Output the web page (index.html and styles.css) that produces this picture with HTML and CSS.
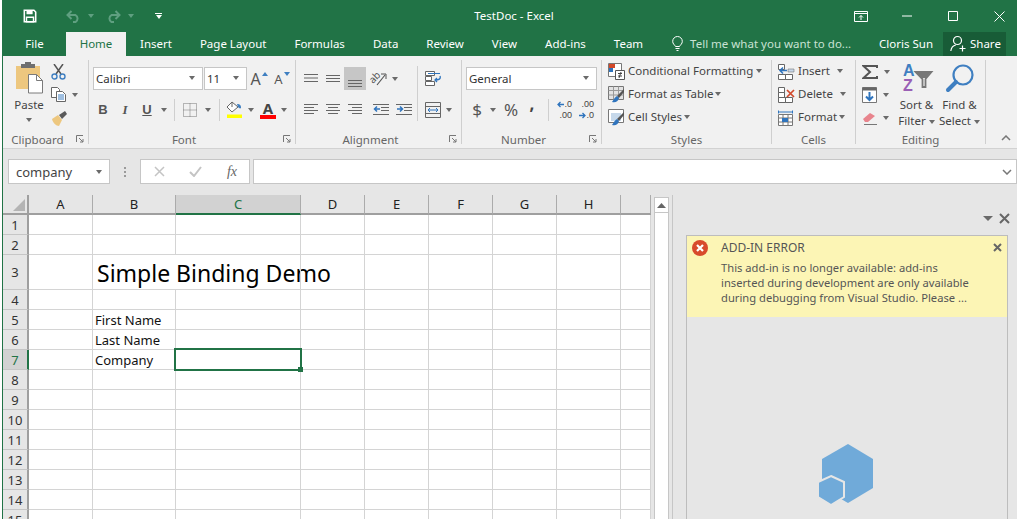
FILE: index.html
```html
<!DOCTYPE html>
<html>
  <head>
    <meta charset="utf-8">
    <title>TestDoc - Excel</title>
    <link rel="stylesheet" href="styles.css">
  </head>
  <body>
    <div class="app">
      <!-- title bar -->
      <div class="titlebar">
        <div class="qat">
          <svg class="qat-save" width="14" height="14" viewBox="0 0 16 16"><path d="M1.500 1.500h11l2 2v11h-13z" fill="none" stroke="#fff" stroke-width="1.800"/><path d="M4 1.500h7v4.500H4z" fill="#fff"/><path d="M4 9.500h8v5H4z" fill="none" stroke="#fff" stroke-width="1.600"/></svg>
          <svg class="qat-undo" width="15" height="13" viewBox="0 0 15 13"><path d="M5.500 1 1.500 5l4 4M2 5h7.500a4 4 0 0 1 0 7H7" fill="none" stroke="#5f9f80" stroke-width="2"/></svg>
          <span class="caret dim qat-c1"></span>
          <svg class="qat-redo" width="15" height="13" viewBox="0 0 15 13"><path d="M9.500 1l4 4-4 4M13 5H5.500a4 4 0 0 0 0 7H8" fill="none" stroke="#5f9f80" stroke-width="2"/></svg>
          <span class="caret dim qat-c2"></span>
          <div class="qat-more"><span></span><span class="caret white"></span></div>
        </div>
        <div class="doc-title">TestDoc - Excel</div>
        <div class="win-btns">
          <svg width="14" height="11" viewBox="0 0 14 11"><path d="M.5.500h13v10H.500zM.5 2.500h13" fill="none" stroke="#fff"/><path d="M7 9V4.500M5 6.500l2-2 2 2" fill="none" stroke="#fff"/></svg>
          <svg class="win-min" width="10" height="10" viewBox="0 0 10 10"><path d="M0 5h10" stroke="#fff"/></svg>
          <svg class="win-max" width="10" height="10" viewBox="0 0 10 10"><path d="M.5.500h9v9h-9z" fill="none" stroke="#fff"/></svg>
          <svg class="win-close" width="11" height="11" viewBox="0 0 11 11"><path d="M.5.500l10 10M10.500.500l-10 10" stroke="#fff"/></svg>
        </div>
      </div>

      <!-- tabs -->
      <div class="tabs">
        <div class="tab tab-file">File</div>
        <div class="tab active">Home</div>
        <div class="tab">Insert</div>
        <div class="tab">Page Layout</div>
        <div class="tab">Formulas</div>
        <div class="tab">Data</div>
        <div class="tab">Review</div>
        <div class="tab">View</div>
        <div class="tab">Add-ins</div>
        <div class="tab">Team</div>
        <div class="tell">
          <svg width="11" height="15" viewBox="0 0 11 15"><path d="M3.500 10.500C2.500 8.500.7 8 .7 5.300a4.800 4.800 0 0 1 9.600 0c0 2.700-1.800 3.200-2.800 5.200zM3.500 12.500h4M4.500 14.500h2" fill="none" stroke="#fff"/></svg>
          <span>Tell me what you want to do...</span>
        </div>
        <div class="user">Cloris Sun</div>
        <div class="share">
          <svg width="17" height="17" viewBox="0 0 17 17"><circle cx="7.500" cy="5.500" r="4" fill="none" stroke="#fff" stroke-width="1.200"/><path d="M.8 16c.5-3.500 2.500-5.500 5-6M12.500 10.500v6M9.500 13.500h6" fill="none" stroke="#fff" stroke-width="1.200"/></svg>
          <span>Share</span>
        </div>
      </div>

      <!-- ribbon -->
      <div class="ribbon">
        <div class="group g-clipboard">
          <div class="group-body clip-body">
            <div class="paste">
              <svg class="paste-icon" width="30" height="32" viewBox="0 0 30 32"><path d="M1 4h24v23H1z" fill="#edc77f"/><path d="M6 2h4V0h6v2h4v4H6z" fill="#6f6f6f"/><path d="M13.500 12.500h8l6 6v12.500h-14z" fill="#fff" stroke="#7a7a7a"/><path d="M21.500 12.500v6h6" fill="none" stroke="#7a7a7a"/></svg>
              <div class="paste-label">Paste</div>
              <span class="caret"></span>
            </div>
            <div class="clip-tools">
              <div class="clip-row">
                <svg width="15" height="16" viewBox="0 0 15 16"><path d="M3 0l7 10M12 0 5 10" stroke="#555" stroke-width="1.500" fill="none"/><circle cx="3.500" cy="12.500" r="2.500" fill="none" stroke="#3f7fc1" stroke-width="1.400"/><circle cx="11.500" cy="12.500" r="2.500" fill="none" stroke="#3f7fc1" stroke-width="1.400"/></svg>
              </div>
              <div class="clip-row">
                <svg width="15" height="15" viewBox="0 0 15 15"><path d="M.5.500h6l2 2v8h-8z" fill="#fff" stroke="#666"/><path d="M5.500 4.500h6l3 3v7h-9z" fill="#fff" stroke="#666"/><path d="M7 8h6M7 10h6M7 12h6" stroke="#3f7fc1"/></svg>
                <span class="caret"></span>
              </div>
              <div class="clip-row">
                <svg width="17" height="16" viewBox="0 0 17 16"><path d="M1 9l6-4 4 5-3 6c-3 0-6-3-7-7z" fill="#edc77f"/><path d="M8 5l6-4 2 3-5 5z" fill="#5a5a5a"/></svg>
              </div>
            </div>
          </div>
          <div class="group-label"><span>Clipboard</span><svg class="launcher" width="8" height="8" viewBox="0 0 8 8"><path d="M.5 7V.5H7M3 3l4 4M7 4v3H4" fill="none" stroke="#777"/></svg></div>
        </div>

        <div class="group g-font">
          <div class="group-body two-rows">
            <div class="row pad-4">
              <div class="combo w-110"><span>Calibri</span><span class="caret"></span></div>
              <div class="combo w-43 gap-1"><span>11</span><span class="caret"></span></div>
              <div class="tool t22 gap-1 grow-a"><span class="a-big">A</span><svg width="6" height="4" viewBox="0 0 6 4"><path d="M0 4l3-4 3 4z" fill="#3f7fc1"/></svg></div>
              <div class="tool t22 gap-1 grow-a"><span class="a-small">A</span><svg width="6" height="4" viewBox="0 0 6 4"><path d="M0 0l3 4 3-4z" fill="#3f7fc1"/></svg></div>
            </div>
            <div class="row pad-3">
              <div class="tool t22 fmt fmt-b">B</div>
              <div class="tool t22 fmt fmt-i">I</div>
              <div class="tool t22 fmt fmt-u">U</div>
              <div class="tool t12"><span class="caret"></span></div>
              <div class="sep"></div>
              <div class="tool t22"><svg width="14" height="14" viewBox="0 0 14 14"><path d="M.5.500h13v13H.500zM7 .5v13M.5 7h13" fill="none" stroke="#777" stroke-dasharray="1 1"/></svg></div>
              <div class="tool t14"><span class="caret"></span></div>
              <div class="sep"></div>
              <div class="tool t20">
                <svg width="17" height="17" viewBox="0 0 17 17"><path d="M6 1 1 6l5 5 6-5z" fill="#fff" stroke="#666"/><path d="M6 1v5" stroke="#666"/><path d="M11 3c3 0 4 1 4 4-1 1-2 0-3-1z" fill="#3f7fc1"/><path d="M1 13.500h15V17H1z" fill="#ffff00"/></svg>
              </div>
              <div class="tool t14"><span class="caret"></span></div>
              <div class="tool t20 font-color"><span>A</span><i></i></div>
              <div class="tool t12"><span class="caret"></span></div>
            </div>
          </div>
          <div class="group-label"><span>Font</span><svg class="launcher" width="8" height="8" viewBox="0 0 8 8"><path d="M.5 7V.5H7M3 3l4 4M7 4v3H4" fill="none" stroke="#777"/></svg></div>
        </div>

        <div class="group g-align">
          <div class="group-body cols">
            <div class="two-rows col-117">
              <div class="row">
                <div class="tool t22"><svg width="14" height="9" viewBox="0 0 14 9"><path d="M0 .5h14M0 4h14M0 7.500h14" stroke="#666"/></svg></div>
                <div class="tool t22"><svg width="14" height="9" viewBox="0 0 14 9"><path d="M0 1.500h14M0 4.500h14M0 7.500h14" stroke="#666"/></svg></div>
                <div class="tool t22 pressed"><svg width="14" height="22" viewBox="0 0 14 22"><path d="M0 13.500h14M0 16.500h14M0 19.500h14" stroke="#666"/></svg></div>
                <div class="tool t24"><svg class="orient-icon" width="18" height="17" viewBox="0 0 18 17"><text class="orient" x="1" y="11" transform="rotate(-45 6 9)">ab</text><path d="M8 15 16 5" stroke="#555" stroke-width="1.200"/><path d="M12 4h5v5" fill="none" stroke="#555"/></svg></div>
                <div class="tool t10"><span class="caret"></span></div>
              </div>
              <div class="row">
                <div class="tool t22"><svg width="14" height="11" viewBox="0 0 14 11"><path d="M0 .5h14M0 3.500h10M0 6.500h14M0 9.500h10" stroke="#666"/></svg></div>
                <div class="tool t22"><svg width="14" height="11" viewBox="0 0 14 11"><path d="M0 .5h14M2 3.500h10M0 6.500h14M2 9.500h10" stroke="#666"/></svg></div>
                <div class="tool t22"><svg width="14" height="11" viewBox="0 0 14 11"><path d="M0 .5h14M4 3.500h10M0 6.500h14M4 9.500h10" stroke="#666"/></svg></div>
                <div class="tool t23 gap-3"><svg width="16" height="12" viewBox="0 0 16 12"><path d="M0 .5h16M8 3.500h8M8 6.500h8M0 10.500h16" stroke="#666"/><path d="M7 5H2M4 2.500 1.500 5 4 7.500" fill="none" stroke="#2f74bd" stroke-width="1.500"/></svg></div>
                <div class="tool t23"><svg width="16" height="12" viewBox="0 0 16 12"><path d="M0 .5h16M8 3.500h8M8 6.500h8M0 10.500h16" stroke="#666"/><path d="M1 5h5M4 2.500 6.500 5 4 7.500" fill="none" stroke="#2f74bd" stroke-width="1.500"/></svg></div>
              </div>
            </div>
            <div class="sep sep-tall"></div>
            <div class="two-rows">
              <div class="row">
                <div class="tool t22"><svg width="16" height="15" viewBox="0 0 16 15"><path d="M.5.500h9v4h-9zM.5 5.500h6v4h-6zM.5 10.500h9v4h-9z" fill="#fff" stroke="#666"/><path d="M3 2.500h12" stroke="#2f74bd"/><path d="M15 5c1 3-1 4-5 4M12 7l-2 2 2 2" fill="none" stroke="#2f74bd" stroke-width="1.300"/></svg></div>
              </div>
              <div class="row">
                <div class="tool t22"><svg width="16" height="16" viewBox="0 0 16 16"><path d="M.5.500h15v15H.500zM.5 4.500h15M.5 11.500h15" fill="none" stroke="#666"/><path d="M3 8h10M5 6 3 8l2 2M11 6l2 2-2 2" fill="none" stroke="#2f74bd"/></svg></div>
                <div class="tool t10"><span class="caret"></span></div>
              </div>
            </div>
          </div>
          <div class="group-label"><span>Alignment</span><svg class="launcher" width="8" height="8" viewBox="0 0 8 8"><path d="M.5 7V.5H7M3 3l4 4M7 4v3H4" fill="none" stroke="#777"/></svg></div>
        </div>

        <div class="group g-number">
          <div class="group-body two-rows">
            <div class="row pad-4">
              <div class="combo w-131"><span>General</span><span class="caret"></span></div>
            </div>
            <div class="row pad-4">
              <div class="tool t22 sym-big">$</div>
              <div class="tool t10"><span class="caret"></span></div>
              <div class="tool t26 sym-big">%</div>
              <div class="tool t16 sym-comma">,</div>
              <div class="sep sep-num"></div>
              <div class="tool t16 dec-inc"><div class="dec-top"><svg width="7" height="7" viewBox="0 0 7 7"><path d="M7 3.500H1M3.500 1 1 3.500 3.500 6" fill="none" stroke="#2f74bd" stroke-width="1.300"/></svg>.0</div><div>.00</div></div>
              <div class="tool t16 dec-dec"><div>.00</div><div class="dec-top"><svg width="7" height="7" viewBox="0 0 7 7"><path d="M0 3.500h6M3.500 1 6 3.500 3.500 6" fill="none" stroke="#2f74bd" stroke-width="1.300"/></svg>.0</div></div>
            </div>
          </div>
          <div class="group-label"><span>Number</span><svg class="launcher" width="8" height="8" viewBox="0 0 8 8"><path d="M.5 7V.5H7M3 3l4 4M7 4v3H4" fill="none" stroke="#777"/></svg></div>
        </div>

        <div class="group g-styles">
          <div class="group-body">
            <div class="list-row">
              <svg width="17" height="17" viewBox="0 0 17 17"><path d="M.5.500h13v13H.500z" fill="#fff" stroke="#777"/><path d="M1 1h6v4H1z" fill="#d2492a"/><path d="M1 5h4v4H1z" fill="#2f74bd"/><path d="M7.500 7.500h9v9h-9z" fill="#fff" stroke="#555"/><path d="M10 10.500h4M10 13h4M13 9l-2 6" stroke="#444" fill="none"/></svg>
              <span>Conditional Formatting</span><span class="caret"></span>
            </div>
            <div class="list-row">
              <svg width="17" height="17" viewBox="0 0 17 17"><path d="M.5.500h15v13H.500z" fill="#e3e3e3" stroke="#777"/><path d="M.5 4.500h15M.5 9h15M5.500.5v13M10.500.5v13" stroke="#999"/><path d="M16 3 9 10l2 2 5-6z" fill="#555"/><path d="M9 10c-2 1-3 3-5 6 3 1 6 0 7-4z" fill="#2f74bd"/></svg>
              <span>Format as Table</span><span class="caret tight-caret"></span>
            </div>
            <div class="list-row">
              <svg width="17" height="17" viewBox="0 0 17 17"><path d="M.5.500h15v13H.500z" fill="#fff" stroke="#777"/><path d="M3 4h10v8H3z" fill="#c6d8ea"/><path d="M16 3 9 10l2 2 5-6z" fill="#555"/><path d="M9 10c-2 1-3 3-5 6 3 1 6 0 7-4z" fill="#2f74bd"/></svg>
              <span>Cell Styles</span><span class="caret tight-caret"></span>
            </div>
          </div>
          <div class="group-label plain"><span>Styles</span></div>
        </div>

        <div class="group g-cells">
          <div class="group-body">
            <div class="list-row">
              <svg width="17" height="16" viewBox="0 0 17 16"><path d="M.5.500h6v5h-6zM.5 10.500h7v5h-7zM7.500 10.500h7v5h-7z" fill="#fff" stroke="#666"/><path d="M10 5h6V8h-6z" fill="#c6d8ea" stroke="#777" stroke-width=".6"/><path d="M9 6.500H2M5 3.500l-3 3 3 3" fill="none" stroke="#2f74bd" stroke-width="1.500"/></svg>
              <span>Insert</span><span class="caret cells-caret"></span>
            </div>
            <div class="list-row">
              <svg width="17" height="16" viewBox="0 0 17 16"><path d="M.5.500h6v5h-6zM.5 10.500h7v5h-7zM7.500 10.500h7v5h-7zM.5 5.500h6v5h-6z" fill="#fff" stroke="#666"/><path d="M9 3l7 7M16 3l-7 7" stroke="#d2492a" stroke-width="1.700"/></svg>
              <span>Delete</span><span class="caret cells-caret"></span>
            </div>
            <div class="list-row">
              <svg width="17" height="16" viewBox="0 0 17 16"><path d="M.5.500v3M14.500.5v3M1 2h13" stroke="#2f74bd" fill="none"/><path d="M.5 4.500h14v11H.500zM.5 8h14M.5 12h14M5 4.500v11M10 4.500v11" fill="#fff" stroke="#777"/><path d="M4 8h6v4H4z" fill="#2f74bd"/></svg>
              <span>Format</span><span class="caret tight-caret"></span>
            </div>
          </div>
          <div class="group-label plain"><span>Cells</span></div>
        </div>

        <div class="group g-editing">
          <div class="group-body edit-body">
            <div class="edit-small">
              <div class="edit-row">
                <svg width="16" height="14" viewBox="0 0 16 14"><path d="M15 3V1H1.500L8 7l-6.500 6H15v-2" fill="none" stroke="#555" stroke-width="2"/></svg>
                <span class="caret"></span>
              </div>
              <div class="edit-row">
                <svg width="15" height="16" viewBox="0 0 15 16"><path d="M.5.500h14v15H.500z" fill="#fff" stroke="#777"/><path d="M.5 .5h14v3H.500z" fill="#666"/><path d="M7.500 5v8M4 9.500l3.500 3.500L11 9.500" fill="none" stroke="#2f74bd" stroke-width="2"/></svg>
                <span class="caret"></span>
              </div>
              <div class="edit-row">
                <svg width="15" height="14" viewBox="0 0 15 14"><path d="M1 8l7-6 5 3-7 6H3z" fill="#e8848d"/><path d="M2 13.500h13" stroke="#777"/></svg>
                <span class="caret"></span>
              </div>
            </div>
            <div class="big-btn b-sort">
              <svg class="sort-icon" width="30" height="30" viewBox="0 0 30 30"><text x="1" y="13" class="az az-a">A</text><text x="1" y="28" class="az az-z">Z</text><path d="M13.500 9h16l-6 7v8h-3v-8z" fill="none" stroke="#777" stroke-width="1.800"/><path d="M14 9h15l-5 6h-5z" fill="#777"/></svg>
              <div>Sort &amp;</div>
              <div>Filter<span class="caret"></span></div>
            </div>
            <div class="big-btn b-find">
              <svg width="30" height="30" viewBox="0 0 30 30"><circle cx="18" cy="12" r="9.500" fill="none" stroke="#3f7fc1" stroke-width="2.200"/><path d="M11 19 3 27" stroke="#3f7fc1" stroke-width="4" stroke-linecap="round"/></svg>
              <div>Find &amp;</div>
              <div>Select<span class="caret"></span></div>
            </div>
          </div>
          <div class="group-label plain"><span>Editing</span></div>
        </div>

        <svg class="collapse" width="10" height="6" viewBox="0 0 10 6"><path d="M1 5l4-4 4 4" fill="none" stroke="#777" stroke-width="1.500"/></svg>
      </div>

      <!-- formula bar -->
      <div class="formula-bar">
        <div class="name-box"><span>company</span><span class="caret"></span></div>
        <div class="grip"><i></i><i></i><i></i></div>
        <div class="fx-box">
          <svg width="11" height="11" viewBox="0 0 11 11"><path d="M1 1l9 9M10 1l-9 9" stroke="#c4c4c4" stroke-width="1.500"/></svg>
          <svg width="13" height="11" viewBox="0 0 13 11"><path d="M1 6l4 4 7-9" fill="none" stroke="#c4c4c4" stroke-width="2"/></svg>
          <span class="fx">fx</span>
        </div>
        <div class="formula-input">
          <svg width="10" height="6" viewBox="0 0 10 6"><path d="M1 1l4 4 4-4" fill="none" stroke="#777" stroke-width="1.500"/></svg>
        </div>
      </div>

      <div class="work">
        <!-- sheet -->
        <div class="sheet">
          <div class="ch corner"><svg width="12" height="12" viewBox="0 0 12 12"><path d="M12 0v12H0z" fill="#b4b4b4"/></svg></div>
          <div class="ch">A</div><div class="ch">B</div><div class="ch ch-on">C</div><div class="ch">D</div><div class="ch">E</div><div class="ch">F</div><div class="ch">G</div><div class="ch">H</div><div class="ch"></div>

          <div class="rh">1</div><div class="c"></div><div class="c"></div><div class="c"></div><div class="c"></div><div class="c"></div><div class="c"></div><div class="c"></div><div class="c"></div><div class="c"></div>
          <div class="rh">2</div><div class="c"></div><div class="c"></div><div class="c"></div><div class="c"></div><div class="c"></div><div class="c"></div><div class="c"></div><div class="c"></div><div class="c"></div>
          <div class="rh">3</div><div class="c"></div><div class="c c-title">Simple Binding Demo</div><div class="c"></div><div class="c"></div><div class="c"></div><div class="c"></div><div class="c"></div><div class="c"></div><div class="c"></div>
          <div class="rh">4</div><div class="c"></div><div class="c"></div><div class="c"></div><div class="c"></div><div class="c"></div><div class="c"></div><div class="c"></div><div class="c"></div><div class="c"></div>
          <div class="rh">5</div><div class="c"></div><div class="c">First Name</div><div class="c"></div><div class="c"></div><div class="c"></div><div class="c"></div><div class="c"></div><div class="c"></div><div class="c"></div>
          <div class="rh">6</div><div class="c"></div><div class="c">Last Name</div><div class="c"></div><div class="c"></div><div class="c"></div><div class="c"></div><div class="c"></div><div class="c"></div><div class="c"></div>
          <div class="rh rh-on">7</div><div class="c"></div><div class="c">Company</div><div class="c selected"><i></i></div><div class="c"></div><div class="c"></div><div class="c"></div><div class="c"></div><div class="c"></div><div class="c"></div>
          <div class="rh">8</div><div class="c"></div><div class="c"></div><div class="c"></div><div class="c"></div><div class="c"></div><div class="c"></div><div class="c"></div><div class="c"></div><div class="c"></div>
          <div class="rh">9</div><div class="c"></div><div class="c"></div><div class="c"></div><div class="c"></div><div class="c"></div><div class="c"></div><div class="c"></div><div class="c"></div><div class="c"></div>
          <div class="rh">10</div><div class="c"></div><div class="c"></div><div class="c"></div><div class="c"></div><div class="c"></div><div class="c"></div><div class="c"></div><div class="c"></div><div class="c"></div>
          <div class="rh">11</div><div class="c"></div><div class="c"></div><div class="c"></div><div class="c"></div><div class="c"></div><div class="c"></div><div class="c"></div><div class="c"></div><div class="c"></div>
          <div class="rh">12</div><div class="c"></div><div class="c"></div><div class="c"></div><div class="c"></div><div class="c"></div><div class="c"></div><div class="c"></div><div class="c"></div><div class="c"></div>
          <div class="rh">13</div><div class="c"></div><div class="c"></div><div class="c"></div><div class="c"></div><div class="c"></div><div class="c"></div><div class="c"></div><div class="c"></div><div class="c"></div>
          <div class="rh">14</div><div class="c"></div><div class="c"></div><div class="c"></div><div class="c"></div><div class="c"></div><div class="c"></div><div class="c"></div><div class="c"></div><div class="c"></div>
          <div class="rh">15</div><div class="c"></div><div class="c"></div><div class="c"></div><div class="c"></div><div class="c"></div><div class="c"></div><div class="c"></div><div class="c"></div><div class="c"></div>
        </div>

        <div class="vscroll">
          <div class="vscroll-up"><svg width="9" height="5" viewBox="0 0 9 5"><path d="M0 5l4.500-5L9 5z" fill="#666"/></svg></div>
        </div>

        <!-- task pane -->
        <div class="pane">
          <div class="pane-head">
            <span class="caret pane-caret"></span>
            <svg width="11" height="11" viewBox="0 0 11 11"><path d="M1 1l9 9M10 1l-9 9" stroke="#666" stroke-width="2"/></svg>
          </div>
          <div class="pane-box">
            <div class="error">
              <svg class="error-icon" width="16" height="16" viewBox="0 0 16 16"><circle cx="8" cy="8" r="8" fill="#d84a2c"/><path d="M5 5l6 6M11 5l-6 6" stroke="#fff" stroke-width="2.200"/></svg>
              <div class="error-text">
                <div class="error-title">ADD-IN ERROR</div>
                <div>This add-in is no longer available: add-ins<br>inserted during development are only available<br>during debugging from Visual Studio. Please ...</div>
              </div>
              <svg class="error-close" width="9" height="9" viewBox="0 0 9 9"><path d="M1 1l7 7M8 1 1 8" stroke="#666" stroke-width="2"/></svg>
            </div>
            <div class="pane-cube">
              <svg width="60" height="64" viewBox="0 0 60 64"><path d="M32 0l25 15v29L32 59 6 44V15z" fill="#70aad9"/><path d="M15 32l13 6v15l-13 8-13-8V38z" fill="#70aad9" stroke="#e6e6e6" stroke-width="2"/></svg>
            </div>
          </div>
        </div>
      </div>
    </div>
  </body>
</html>
```

FILE: styles.css
```css
* {
  box-sizing: border-box;
}

html, body {
  margin: 0;
  height: 100%;
  overflow: hidden;
  background: #fff;
}

body {
  font-family: "Noto Sans", "Open Sans", sans-serif;
  font-size: 11.5px;
  color: #444;
}

.app {
  display: flex;
  flex-direction: column;
  height: 519px;
  margin-left: 2px;
  border-left: 1px solid #217346;
  overflow: hidden;
}

.caret {
  display: inline-block;
  flex: none;
  width: 0;
  height: 0;
  border-left: 3.5px solid transparent;
  border-right: 3.5px solid transparent;
  border-top: 4px solid #6a6a6a;
}
.caret.dim {
  border-top-color: #5f9f80;
}
.caret.white {
  border-top-color: #fff;
}

/* title bar */
.titlebar {
  display: flex;
  align-items: center;
  flex: none;
  height: 32px;
  background: #217346;
  color: #fff;
}
.qat, .win-btns {
  display: flex;
  flex: 1;
  align-items: center;
}
.qat {
  padding-left: 20px;
}
.qat-undo {
  margin-left: 29px;
}
.qat-c1 {
  margin-left: 7px;
}
.qat-redo {
  margin-left: 12px;
}
.qat-c2 {
  margin-left: 7px;
}
.qat-more {
  display: flex;
  flex-direction: column;
  align-items: center;
  gap: 1px;
  margin-left: 21px;
}
.qat-more span:first-child {
  width: 7px;
  height: 1px;
  background: #fff;
}
.doc-title {
  padding-bottom: 1px;
}
.win-btns {
  justify-content: flex-end;
  padding-right: 12px;
}
.win-min {
  margin-left: 34px;
}
.win-max {
  margin-left: 36px;
}
.win-close {
  margin-left: 36px;
}

/* tabs */
.tabs {
  display: flex;
  align-items: stretch;
  flex: none;
  height: 24px;
  background: #217346;
  color: #fff;
  white-space: nowrap;
}
.tab {
  display: flex;
  align-items: center;
  flex: none;
  padding: 0 14px 1px;
}
.tab-file {
  justify-content: center;
  width: 63px;
  padding: 0 0 1px;
}
.tab.active {
  width: 60px;
  justify-content: center;
  padding: 0 0 1px;
  background: #f1f1f1;
  color: #217346;
}
.tell {
  display: flex;
  align-items: center;
  gap: 7px;
  margin-left: 15px;
  padding-bottom: 1px;
  color: #c9e2d4;
}
.user {
  display: flex;
  align-items: center;
  margin-left: auto;
  padding-bottom: 1px;
}
.share {
  display: flex;
  align-items: center;
  gap: 3px;
  width: 63px;
  margin: 0 11px 0 10px;
  padding: 0 0 1px 7px;
  background: #185c37;
}

/* ribbon */
.ribbon {
  display: flex;
  flex: none;
  height: 93px;
  padding-top: 4px;
  background: #f1f1f1;
  border-bottom: 1px solid #d2d2d2;
  white-space: nowrap;
}
.group {
  display: flex;
  flex-direction: column;
  height: 84px;
  border-right: 1px solid #cfcfcf;
}
.g-clipboard { width: 86px; }
.g-font { width: 207px; }
.g-align { width: 166px; }
.g-number { width: 140px; }
.g-styles { width: 170px; }
.g-cells { width: 84px; }
.g-editing { width: 130px; }

.group-body {
  flex: none;
  height: 71px;
}
.group-label {
  display: flex;
  align-items: center;
  flex: none;
  height: 16px;
  color: #666;
}
.group-label span {
  flex: 1;
  text-align: center;
}
.launcher {
  flex: none;
  margin: 0 4px;
}
.collapse {
  align-self: flex-end;
  margin: 0 6px 7px auto;
}

.two-rows {
  display: flex;
  flex-direction: column;
  gap: 8px;
  padding-top: 7px;
}
.cols {
  display: flex;
  padding-left: 4px;
}
.col-117 {
  width: 117px;
}
.row {
  display: flex;
  align-items: center;
  height: 23px;
}
.pad-3 { padding-left: 3px; }
.pad-4 { padding-left: 4px; }
.gap-1 { margin-left: 1px; }
.gap-3 { margin-left: 3px; }

.tool {
  display: flex;
  align-items: center;
  justify-content: center;
  flex: none;
  height: 22px;
}
.t10 { width: 10px; }
.t12 { width: 12px; }
.t14 { width: 14px; }
.t16 { width: 16px; }
.t20 { width: 20px; }
.t22 { width: 22px; }
.t23 { width: 23px; }
.t24 { width: 24px; }
.t26 { width: 26px; }

.pressed {
  align-items: flex-start;
  height: 23px;
  background: #c6c6c6;
}
.sep {
  flex: none;
  width: 1px;
  height: 22px;
  margin: 0 4px;
  background: #cfcfcf;
}
.sep-tall {
  height: 55px;
  margin: 6px 4px 0 0;
}
.sep-num {
  margin: 0 7px 0 8px;
}

.orient-icon {
  overflow: visible;
}
.orient {
  font-size: 10px;
  fill: #555;
}

.combo {
  display: flex;
  align-items: center;
  justify-content: space-between;
  flex: none;
  height: 23px;
  padding: 0 7px 1px 2px;
  background: #fff;
  border: 1px solid #c6c6c6;
  color: #333;
}
.w-110 { width: 110px; }
.w-43 { width: 43px; }
.w-131 { width: 131px; }

/* clipboard */
.clip-body {
  display: flex;
}
.paste {
  display: flex;
  flex-direction: column;
  align-items: center;
  width: 34px;
  margin-left: 9px;
  padding-top: 2px;
}
.paste-icon {
  flex: none;
  margin-left: 2px;
}
.paste-label {
  margin-top: 2px;
  line-height: 17px;
}
.paste .caret {
  margin-top: 5px;
}
.clip-tools {
  margin-left: 4px;
}
.clip-row {
  display: flex;
  align-items: center;
  gap: 6px;
  height: 23px;
  padding-left: 1px;
}

/* font */
.grow-a {
  align-items: center;
  gap: 1px;
  color: #555;
}
.grow-a svg {
  margin-bottom: 10px;
}
.a-big {
  font-size: 16px;
}
.a-small {
  font-size: 13px;
}
.fmt {
  font-family: "Liberation Sans", sans-serif;
  font-size: 13px;
  color: #555;
}
.fmt-b {
  font-weight: bold;
}
.fmt-i {
  font-family: "Liberation Serif", serif;
  font-style: italic;
  font-weight: bold;
}
.fmt-u {
  font-weight: bold;
  text-decoration: underline;
}
.font-color {
  flex-direction: column;
  font-size: 15px;
  font-weight: bold;
  line-height: 14px;
}
.font-color i {
  width: 16px;
  height: 4px;
  background: #f00;
}

/* number */
.sym-big {
  font-size: 17px;
  color: #555;
}
.sym-comma {
  padding-bottom: 12px;
  font-size: 17px;
  font-weight: bold;
}
.dec-inc, .dec-dec {
  flex-direction: column;
  font-family: "Liberation Sans", sans-serif;
  font-size: 9px;
  line-height: 11px;
  color: #444;
}
.dec-inc {
  align-items: flex-end;
}
.dec-dec {
  margin-left: 6px;
  align-items: flex-end;
}
.dec-top {
  display: flex;
  align-items: center;
}

/* styles and cells lists */
.list-row {
  display: flex;
  align-items: center;
  gap: 3px;
  height: 23px;
  padding: 0 0 2px 6px;
}
.list-row svg {
  margin-top: 2px;
}
.tight-caret {
  margin-left: -1px;
}
.cells-caret {
  margin-left: 4px;
}

/* editing */
.edit-body {
  display: flex;
}
.edit-small {
  width: 39px;
  padding-left: 6px;
}
.edit-row {
  display: flex;
  align-items: center;
  gap: 6px;
  height: 23px;
}
.big-btn {
  display: flex;
  flex-direction: column;
  align-items: center;
  width: 43px;
  padding-top: 3px;
  line-height: 16px;
}
.big-btn svg {
  margin-bottom: 4px;
}
.big-btn .caret {
  margin-left: 3px;
  vertical-align: 1px;
}
.sort-icon {
  overflow: visible;
}
.az {
  font-family: "Liberation Sans", sans-serif;
  font-size: 16px;
  font-weight: bold;
}
.az-a {
  fill: #3f7fc1;
}
.az-z {
  fill: #9a5fb5;
}

/* formula bar */
.formula-bar {
  display: flex;
  flex: none;
  height: 46px;
  padding: 10px 0 11px 5px;
  background: #e6e6e6;
}
.name-box {
  display: flex;
  align-items: center;
  justify-content: space-between;
  width: 102px;
  padding: 0 7px;
  background: #fff;
  border: 1px solid #c6c6c6;
  font-size: 13px;
  color: #444;
}
.grip {
  display: flex;
  flex-direction: column;
  align-items: center;
  justify-content: center;
  gap: 2px;
  width: 30px;
}
.grip i {
  width: 2px;
  height: 2px;
  background: #9a9a9a;
}
.fx-box {
  display: flex;
  align-items: center;
  justify-content: space-between;
  width: 110px;
  padding: 0 12px 0 13px;
  background: #fff;
  border: 1px solid #c6c6c6;
}
.fx {
  font-family: "Liberation Serif", serif;
  font-size: 14px;
  font-style: italic;
  color: #666;
}
.formula-input {
  display: flex;
  align-items: center;
  justify-content: flex-end;
  flex: 1;
  margin-left: 3px;
  padding-right: 4px;
  background: #fff;
  border: 1px solid #c6c6c6;
}

/* sheet */
.work {
  display: flex;
  flex: 1;
  min-height: 0;
  background: #e6e6e6;
}
.sheet {
  display: grid;
  grid-template-columns: 26px 64px 83px 125px repeat(5, 64px) 30px;
  grid-template-rows: 20px 20px 20px 35px repeat(12, 20px);
  flex: none;
  align-self: flex-start;
  background: #fff;
  font-size: 13px;
  color: #111;
}
.ch {
  display: flex;
  align-items: center;
  justify-content: center;
  background: #e6e6e6;
  border-right: 1px solid #ababab;
  border-bottom: 2px solid #9f9f9f;
  color: #222;
}
.corner {
  justify-content: flex-end;
  align-items: flex-end;
  padding: 0 2px 2px 0;
  border-right: 2px solid #9f9f9f;
}
.ch-on {
  background: #d2d2d2;
  border-bottom-color: #217346;
  color: #217346;
}
.rh {
  display: flex;
  align-items: center;
  justify-content: center;
  background: #e6e6e6;
  border-right: 2px solid #9f9f9f;
  border-bottom: 1px solid #c6c6c6;
  color: #333;
}
.rh-on {
  background: #d2d2d2;
  border-right-color: #217346;
  color: #217346;
}
.c {
  display: flex;
  align-items: center;
  padding-left: 2px;
  border-right: 1px solid #d4d4d4;
  border-bottom: 1px solid #d4d4d4;
  white-space: nowrap;
}
.c-title {
  padding: 1px 0 0 4px;
  font-size: 23px;
  color: #000;
  border-right: 0;
}
.selected {
  position: relative;
}
.selected::before {
  content: "";
  position: absolute;
  left: -2px;
  top: -2px;
  right: -2px;
  bottom: -2px;
  border: 2px solid #217346;
}
.selected i {
  position: absolute;
  right: -3px;
  bottom: -3px;
  width: 5px;
  height: 5px;
  background: #217346;
}

.vscroll {
  flex: none;
  width: 15px;
  margin: 2px 0 0 3px;
  background: #fff;
  border: 1px solid #c6c6c6;
  border-bottom: 0;
}
.vscroll-up {
  display: flex;
  align-items: center;
  justify-content: center;
  height: 15px;
  border-bottom: 1px solid #c6c6c6;
}

/* task pane */
.pane {
  display: flex;
  flex-direction: column;
  flex: 1;
  margin-left: 3px;
  padding: 0 9px 0 13px;
  border-left: 1px solid #c6c6c6;
}
.pane-head {
  display: flex;
  align-items: center;
  justify-content: flex-end;
  gap: 6px;
  height: 40px;
  margin-right: -2px;
  padding-top: 6px;
}
.pane-caret {
  border-left-width: 5px;
  border-right-width: 5px;
  border-top-width: 5px;
}
.pane-box {
  flex: 1;
  border: 1px solid #bdbdbd;
  border-bottom: 0;
}
.error {
  display: flex;
  height: 81px;
  padding: 4px 5px 0 5px;
  background: #fcf5b5;
  color: #555;
  font-size: 11.2px;
  line-height: 15px;
}
.error-icon {
  flex: none;
}
.error-text {
  flex: 1;
  margin-left: 13px;
}
.error-title {
  margin-bottom: 5px;
  font-size: 12px;
}
.error-close {
  flex: none;
  margin-top: 3px;
}
.pane-cube {
  display: flex;
  justify-content: center;
  padding: 127px 2px 0 0;
}
```
